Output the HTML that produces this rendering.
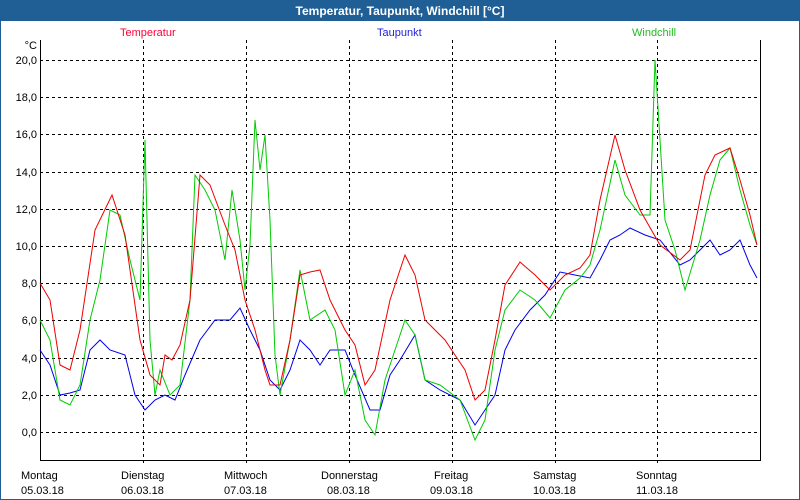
<!DOCTYPE html>
<html><head><meta charset="utf-8"><style>
html,body{margin:0;padding:0;width:800px;height:500px;overflow:hidden;background:#fff;font-family:"Liberation Sans",sans-serif;}
</style></head><body>
<svg width="800" height="500" xmlns="http://www.w3.org/2000/svg" font-family="Liberation Sans, sans-serif" font-size="11">
<rect x="0" y="0" width="800" height="500" fill="#fff"/>
<rect x="0.5" y="0.5" width="799" height="499" fill="none" stroke="#1f5f96"/>
<rect x="0" y="0" width="800" height="21" fill="#1f5f96"/>
<text x="400" y="15" fill="#fff" font-weight="bold" font-size="12" text-anchor="middle">Temperatur, Taupunkt, Windchill [°C]</text>
<text x="120" y="36" fill="#ff0033">Temperatur</text>
<text x="377" y="36" fill="#2222dd">Taupunkt</text>
<text x="632" y="36" fill="#22bb22">Windchill</text>
<g stroke="#000" stroke-dasharray="3,3" stroke-width="1">
<line x1="40" y1="60.5" x2="760" y2="60.5"/><line x1="40" y1="97.5" x2="760" y2="97.5"/>
<line x1="40" y1="134.5" x2="760" y2="134.5"/><line x1="40" y1="172.5" x2="760" y2="172.5"/>
<line x1="40" y1="209.5" x2="760" y2="209.5"/><line x1="40" y1="246.5" x2="760" y2="246.5"/>
<line x1="40" y1="283.5" x2="760" y2="283.5"/><line x1="40" y1="320.5" x2="760" y2="320.5"/>
<line x1="40" y1="358.5" x2="760" y2="358.5"/><line x1="40" y1="395.5" x2="760" y2="395.5"/>
<line x1="40" y1="432.5" x2="760" y2="432.5"/>
<line x1="143.5" y1="40" x2="143.5" y2="466"/><line x1="246.5" y1="40" x2="246.5" y2="466"/>
<line x1="349.5" y1="40" x2="349.5" y2="466"/><line x1="452.5" y1="40" x2="452.5" y2="466"/>
<line x1="555.5" y1="40" x2="555.5" y2="466"/><line x1="657.5" y1="40" x2="657.5" y2="466"/>
</g>
<path d="M40.5 40V460.5H760.5V40" fill="none" stroke="#000"/>
<g text-anchor="end" fill="#000">
<text x="37" y="49">°C</text>
<text x="37" y="64">20,0</text><text x="37" y="101">18,0</text><text x="37" y="138">16,0</text>
<text x="37" y="176">14,0</text><text x="37" y="213">12,0</text><text x="37" y="250">10,0</text>
<text x="37" y="287">8,0</text><text x="37" y="324">6,0</text><text x="37" y="362">4,0</text>
<text x="37" y="399">2,0</text><text x="37" y="436">0,0</text>
</g>
<g fill="#000">
<text x="21" y="479">Montag</text><text x="21" y="494">05.03.18</text>
<text x="121" y="479">Dienstag</text><text x="121" y="494">06.03.18</text>
<text x="224" y="479">Mittwoch</text><text x="224" y="494">07.03.18</text>
<text x="321" y="479">Donnerstag</text><text x="327" y="494">08.03.18</text>
<text x="434" y="479">Freitag</text><text x="430" y="494">09.03.18</text>
<text x="533" y="479">Samstag</text><text x="533" y="494">10.03.18</text>
<text x="636" y="479">Sonntag</text><text x="636" y="494">11.03.18</text>
</g>
<polyline fill="none" stroke="#0000ee" points="40,350 50,365 60,395 70,393 80,390 90,350 100,340 110,350 125,355 135,395 145,410 155,400 165,395 175,400 185,375 200,340 215,320 230,320 240,308 250,330 260,350 270,380 280,390 290,370 300,340 310,350 320,365 330,350 345,350 355,375 370,410 380,410 390,375 400,360 415,335 425,380 440,390 460,400 475,425 485,410 495,395 505,350 515,330 530,310 545,295 560,272 575,275 590,278 600,260 610,240 620,235 630,228 645,235 660,240 680,265 690,260 700,250 710,240 720,255 730,250 740,240 750,265 757,278"/>
<polyline fill="none" stroke="#00cc00" points="40,320 50,340 60,400 70,405 80,385 90,320 100,280 110,210 120,215 130,260 140,300 145,140 150,340 155,395 160,370 170,395 180,385 190,300 195,175 205,190 215,210 225,260 232,190 240,240 245,290 250,245 255,120 260,170 265,135 270,220 275,355 280,395 290,340 300,270 310,320 325,310 335,330 345,395 355,370 365,420 375,435 385,380 395,350 405,320 415,335 425,380 440,385 460,400 475,440 485,420 495,350 505,310 520,290 535,300 550,318 565,290 580,278 590,265 600,230 615,160 625,195 640,215 650,215 655,60 660,140 665,220 675,250 685,290 700,240 710,195 720,160 730,148 740,190 750,225 757,245"/>
<polyline fill="none" stroke="#ee0000" points="40,283 50,300 60,365 70,370 80,330 95,230 112,195 125,235 140,340 150,375 160,385 165,355 172,360 180,345 190,300 200,175 210,185 225,225 235,250 245,300 255,330 265,370 270,385 280,385 290,340 300,275 310,272 320,270 330,300 345,330 355,345 365,385 375,370 390,300 405,255 415,275 425,320 435,330 445,340 455,355 465,370 475,400 485,390 495,340 505,285 520,262 535,275 550,290 565,275 580,268 590,255 600,200 615,135 625,170 640,210 660,245 680,260 690,250 705,175 715,155 730,148 740,180 750,215 757,245"/>
</svg>
</body></html>
